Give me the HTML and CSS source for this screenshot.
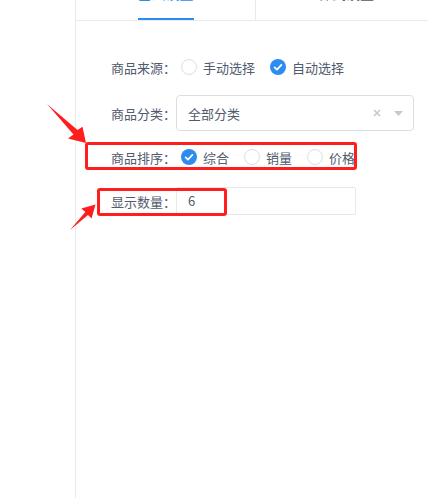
FILE: index.html
```html
<!DOCTYPE html>
<html lang="zh-CN">
<head>
<meta charset="utf-8">
<title>商品设置</title>
<link rel="stylesheet" href="styles.css">
</head>
<body>
<div class="page">
  <aside class="side"></aside>
  <main class="panel">
    <div class="tabs">
      <div class="tab active"><span class="tab-label">基础设置</span></div>
      <div class="tab"><span class="tab-label">样式设置</span></div>
    </div>
    <form class="form">
      <div class="row row-first">
        <label class="label">商品来源：</label>
        <div class="radios">
          <span class="radio"><span class="dot"></span>手动选择</span>
          <span class="radio checked"><span class="dot"><svg viewBox="0 0 16 16" width="16" height="16"><path d="M4.6 8.3 L7 10.6 L11.4 5.9" fill="none" stroke="#fff" stroke-width="1.7" stroke-linecap="round" stroke-linejoin="round"/></svg></span>自动选择</span>
        </div>
      </div>
      <div class="row">
        <label class="label">商品分类：</label>
        <div class="select">
          <span class="select-value">全部分类</span>
          <svg class="clear" viewBox="0 0 8 8" width="8" height="8"><path d="M1 1 L7 7 M7 1 L1 7" stroke="#c5c8ce" stroke-width="1.6"/></svg>
          <svg class="caret" viewBox="0 0 9 5" width="9" height="5"><path d="M0 0 H9 L4.5 5 Z" fill="#c5c8ce"/></svg>
        </div>
      </div>
      <div class="row">
        <label class="label">商品排序：</label>
        <div class="radios">
          <span class="radio checked"><span class="dot"><svg viewBox="0 0 16 16" width="16" height="16"><path d="M4.6 8.3 L7 10.6 L11.4 5.9" fill="none" stroke="#fff" stroke-width="1.7" stroke-linecap="round" stroke-linejoin="round"/></svg></span>综合</span>
          <span class="radio"><span class="dot"></span>销量</span>
          <span class="radio"><span class="dot"></span>价格</span>
        </div>
      </div>
      <div class="row">
        <label class="label">显示数量：</label>
        <div class="input">6</div>
      </div>
    </form>
  </main>
  <svg class="annot" viewBox="0 0 428 498" width="428" height="498">
    <rect x="86.5" y="143.5" width="269" height="25" rx="1.5" fill="none" stroke="#ff1e1e" stroke-width="3"/>
    <rect x="98.5" y="189.5" width="127" height="25" rx="1.5" fill="none" stroke="#ff1e1e" stroke-width="3"/>
    <polygon points="47,104 77.5,130 82.5,126.8 86,143 68,138.5 73.5,134.5" fill="#ff1e1e"/>
    <polygon points="70,230 85.3,212 81.3,208.4 95.5,204.5 91.6,218.6 88,215" fill="#ff1e1e"/>
  </svg>
</div>
</body>
</html>
```
FILE: styles.css
```css
html, body {
  margin: 0;
  padding: 0;
  background: #fff;
}
body {
  font-family: "Noto Sans CJK SC", "Noto Sans", sans-serif;
  font-size: 13px;
  color: #515a6e;
  overflow: hidden;
}
.page {
  position: relative;
  display: flex;
  width: 428px;
  height: 498px;
  overflow: hidden;
}
.side {
  flex: 0 0 75px;
  border-right: 1px solid #e8eaec;
}
.panel {
  flex: 0 0 auto;
  width: 360px;
}
.tabs {
  display: flex;
  margin-top: -28px;
  border-bottom: 1px solid #e8eaec;
  width: 360px;
}
.tab {
  flex: 0 0 180px;
  box-sizing: border-box;
  text-align: center;
  font-size: 14px;
  color: #515a6e;
}
.tab.active {
  border-right: 1px solid #e8eaec;
  color: #2d8cf0;
}
.tab-label {
  display: inline-block;
  line-height: 22px;
  padding: 10px 0 14px;
  border-bottom: 2px solid transparent;
}
.tab.active .tab-label {
  border-bottom-color: #2d8cf0;
}
.form {
  padding-top: 28px;
  margin: 0;
}
.row {
  display: flex;
  align-items: center;
  height: 36px;
  margin-bottom: 8px;
}
.row-first {
  margin-bottom: 10px;
}
.label {
  flex: 0 0 100px;
  text-align: right;
  white-space: nowrap;
}
.radios {
  display: flex;
  align-items: center;
  margin-left: 5px;
}
.radio {
  display: inline-flex;
  align-items: center;
  margin-right: 15px;
  white-space: nowrap;
}
.dot {
  box-sizing: border-box;
  width: 16px;
  height: 16px;
  border-radius: 50%;
  border: 1px solid #dcdee2;
  margin-right: 6px;
  display: inline-flex;
}
.radio.checked .dot {
  border: none;
  background: #2d8cf0;
}
.select {
  box-sizing: border-box;
  width: 238px;
  height: 36px;
  border: 1px solid #dcdee2;
  border-radius: 4px;
  display: flex;
  align-items: center;
  padding: 0 10px 0 11px;
  color: #515a6e;
}
.select-value {
  flex: 1;
}
.clear {
  margin-right: 13px;
}
.input {
  box-sizing: border-box;
  width: 180px;
  height: 28px;
  border: 1px solid #e8e8e8;
  border-radius: 2px;
  padding-left: 11px;
  line-height: 26px;
  color: #515a6e;
}
.annot {
  position: absolute;
  left: 0;
  top: 0;
  pointer-events: none;
}
```
